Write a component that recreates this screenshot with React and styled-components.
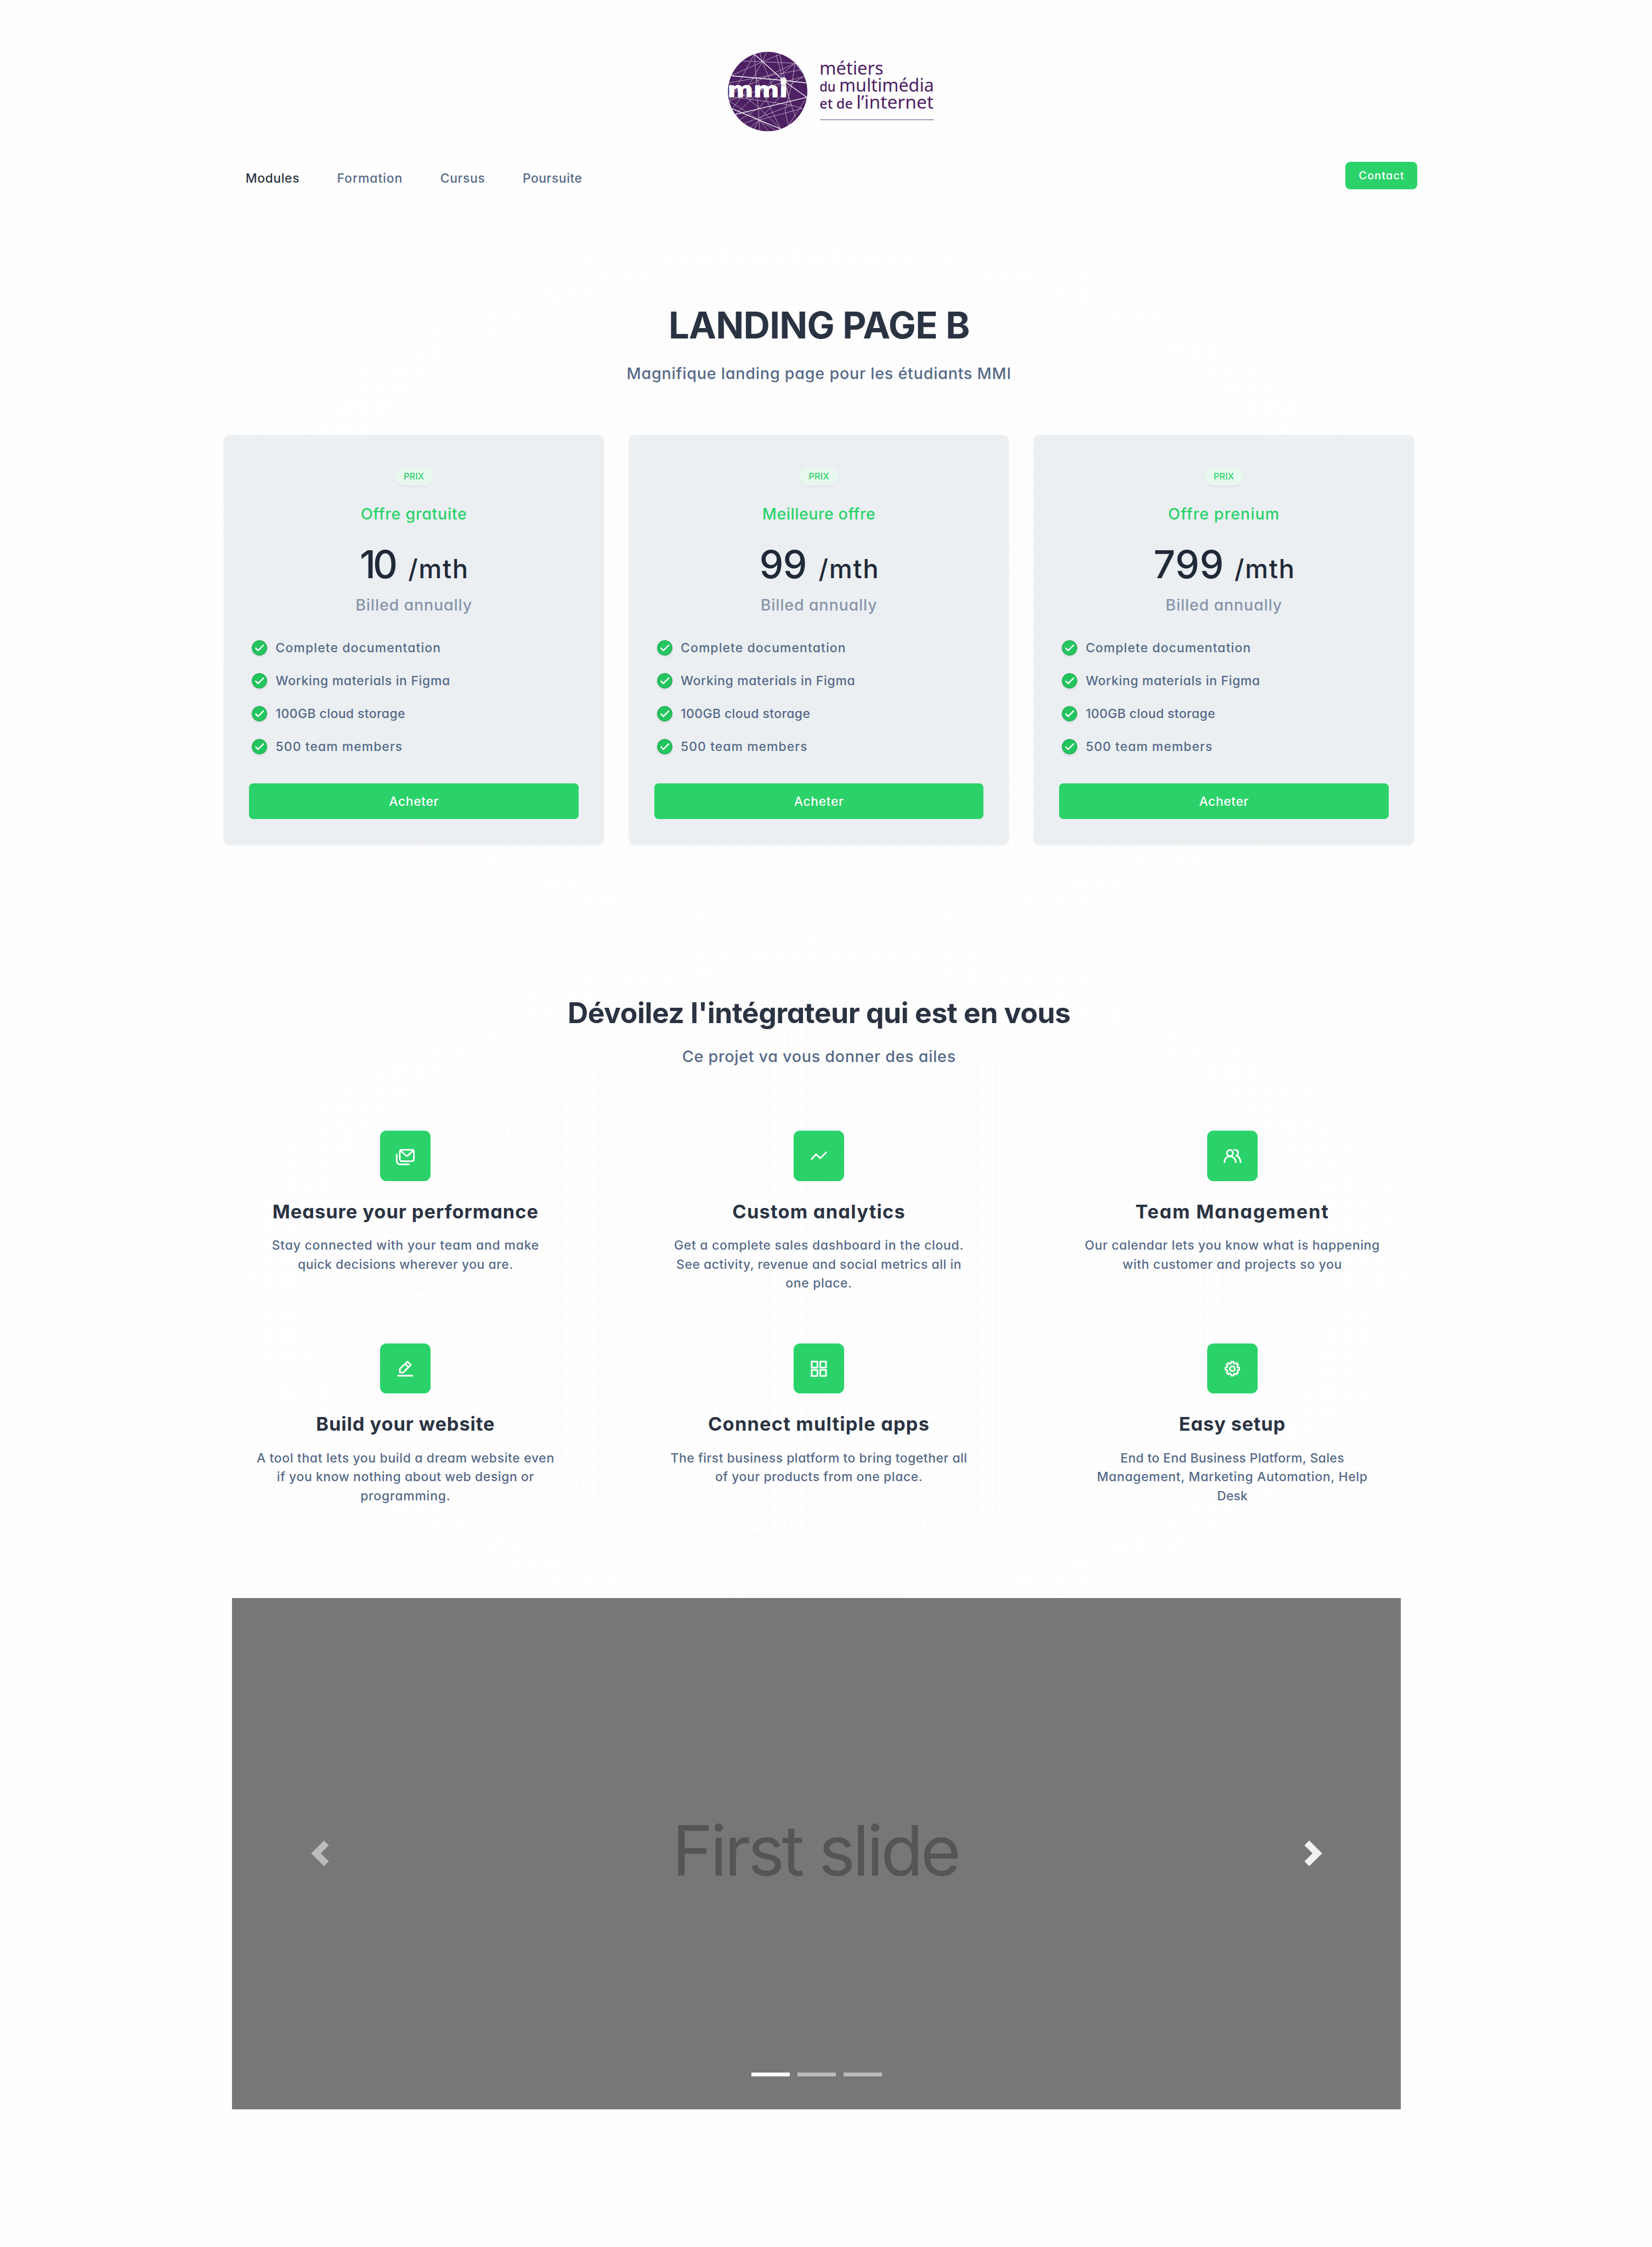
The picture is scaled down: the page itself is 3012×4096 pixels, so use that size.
import React from "react";
import styled, { createGlobalStyle } from "styled-components";

const color = {
  page: "#fefefe",
  green: "#2bd269",
  ink: "#2a3342",
  slate: "#556987",
  muted: "#8896ab",
  card: "#ebeff2",
  plum: "#4c2163",
};

const GlobalStyle = createGlobalStyle`
  html { font-size: 9.565px; }
  body {
    margin: 0;
    background: ${color.page};
    color: ${color.ink};
    font-family: Inter, "Liberation Sans", sans-serif;
    font-feature-settings: "cv11";
    font-weight: 500;
    -webkit-font-smoothing: antialiased;
  }
  * { box-sizing: border-box; }
  h1, h2, h3, p, ul { margin: 0; padding: 0; }
`;

const Page = styled.div`
  width: 314.9rem;
  min-height: 428.2rem;
  overflow: hidden;
`;

/* One unbroken line of text with its own tracking */
const Line = styled.span`
  display: block;
  white-space: nowrap;
  letter-spacing: ${(p) => p.$track || 0}em;
`;

/* ---------- header ---------- */

const Header = styled.header`
  display: flex;
  justify-content: center;
  padding: 8rem 0 0 2.1rem;
`;

const LogoSvg = styled.svg`
  display: block;
  width: 43rem;
  height: 19rem;
`;

const Nav = styled.nav`
  display: flex;
  justify-content: space-between;
  align-items: flex-start;
  height: 13rem;
  padding: 3.8rem 44.7rem 0 46.8rem;
`;

const NavLinks = styled.div`
  display: flex;
  gap: 7.15rem;
  padding-top: 1.36rem;
`;

const NavLink = styled.a`
  font-size: 2.4rem;
  line-height: 3.6rem;
  color: ${(p) => (p.$active ? color.ink : color.slate)};
`;

const Button = styled.button`
  display: flex;
  align-items: center;
  justify-content: center;
  width: ${(p) => (p.$small ? "13.7rem" : "100%")};
  height: ${(p) => (p.$small ? "5.3rem" : "6.8rem")};
  padding: ${(p) => (p.$small ? "0" : "0.2rem 0 0")};
  border: 0;
  border-radius: ${(p) => (p.$small ? "0.9rem" : "0.8rem")};
  background: ${color.green};
  color: #fff;
  font: inherit;
  font-feature-settings: inherit;
  font-size: ${(p) => (p.$small ? "2.1rem" : "2.4rem")};
`;

/* ---------- sections ---------- */

const Section = styled.section`
  padding: ${(p) => p.$pad};
  background-image:
    radial-gradient(ellipse 39% 58% at 49.5% 54%, transparent 60%, ${color.page} 100%),
    linear-gradient(to right, ${(p) => p.$grid} 0.25rem, transparent 0.25rem),
    linear-gradient(to bottom, ${(p) => p.$grid} 0.25rem, transparent 0.25rem);
  background-size: 100% 100%, 3.604rem 3.604rem, 3.604rem 3.604rem;
  background-position: 0 0, 2.36rem 0, 0 ${(p) => p.$phase};
`;

const Title = styled.h1`
  text-align: center;
  font-size: 7rem;
  line-height: 7.2rem;
  font-weight: 700;
`;

const Heading = styled.h2`
  text-align: center;
  font-size: 5.4rem;
  line-height: 6rem;
  font-weight: 700;
`;

const Lead = styled.p`
  margin-top: ${(p) => p.$top};
  text-align: center;
  font-size: 3rem;
  line-height: 4.8rem;
  color: ${color.slate};
`;

/* ---------- pricing ---------- */

const Plans = styled.div`
  display: grid;
  grid-template-columns: repeat(3, 72.4rem);
  gap: 4.8rem;
  margin-top: 9.34rem;
`;

const PlanCard = styled.article`
  display: flex;
  flex-direction: column;
  align-items: center;
  height: 78.05rem;
  padding: 6.05rem 4.8rem 4.85rem;
  border-radius: 1.2rem;
  background: ${color.card};
  box-shadow: 0 0.2rem 0.4rem rgba(30, 41, 59, 0.07);
`;

const Badge = styled.span`
  display: flex;
  align-items: center;
  justify-content: center;
  width: 7.4rem;
  height: 3.55rem;
  border-radius: 1.8rem;
  background: #e8f8ef;
  box-shadow: 0 0.15rem 0.3rem rgba(30, 41, 59, 0.07);
  color: ${color.green};
  font-size: 1.7rem;
`;

const PlanName = styled.h3`
  margin-top: 3.03rem;
  font-size: 3rem;
  line-height: 4.8rem;
  font-weight: 500;
  color: ${color.green};
`;

const Price = styled.div`
  display: flex;
  align-items: baseline;
  gap: ${(p) => p.$gap};
  height: 7.2rem;
  margin-top: 3.66rem;
  line-height: 7.2rem;
  color: #202938;
`;

const Amount = styled.span`
  font-size: 7.3rem;
  letter-spacing: ${(p) => p.$track}em;
`;

const Period = styled.span`
  font-size: 4.95rem;
  letter-spacing: 0.035em;
  margin-right: -0.035em;
`;

const Billing = styled.p`
  margin-top: 1.72rem;
  font-size: 3rem;
  line-height: 4.8rem;
  color: ${color.muted};
`;

const Perks = styled.ul`
  align-self: stretch;
  display: flex;
  flex-direction: column;
  gap: 2.7rem;
  margin: 3.96rem 0 5.13rem;
  padding-left: 0.5rem;
  list-style: none;
`;

const Perk = styled.li`
  display: flex;
  align-items: center;
  gap: 1.6rem;
  height: 3.6rem;
  font-size: 2.4rem;
  line-height: 3.6rem;
  color: ${color.slate};
`;

const CheckSvg = styled.svg`
  display: block;
  width: 2.95rem;
  height: 2.95rem;
  border-radius: 50%;
  box-shadow: 0 0.2rem 0.4rem rgba(30, 41, 59, 0.12);
`;

/* ---------- features ---------- */

const Features = styled.div`
  display: grid;
  grid-template-columns: repeat(3, 78.8rem);
  row-gap: 9.72rem;
  margin: 11.77rem 0 0 -4.8rem;
`;

const Feature = styled.article`
  display: flex;
  flex-direction: column;
  align-items: center;
  height: 30.78rem;
`;

const IconTile = styled.div`
  flex: none;
  width: 9.6rem;
  height: 9.6rem;
  border-radius: 1.2rem;
  background: ${color.green};

  svg {
    display: block;
    width: 100%;
    height: 100%;
    fill: none;
    stroke: #fff;
    stroke-width: 3.1;
    stroke-linecap: round;
    stroke-linejoin: round;
  }
`;

const FeatureTitle = styled.h3`
  margin-top: 3.43rem;
  font-size: 3.6rem;
  line-height: 4.8rem;
  font-weight: 700;
`;

const FeatureText = styled.p`
  margin-top: 2.27rem;
  text-align: center;
  font-size: 2.4rem;
  line-height: 3.6rem;
  color: ${color.slate};
`;

/* ---------- carousel ---------- */

const Carousel = styled.section`
  position: relative;
  display: flex;
  align-items: center;
  width: 222.8rem;
  height: 97.4rem;
  margin: 0 0 0 44.25rem;
  background: #777;
`;

const Control = styled.button`
  display: flex;
  justify-content: center;
  align-items: center;
  width: 15%;
  height: 100%;
  padding: 0;
  border: 0;
  background: none;
  opacity: ${(p) => (p.$dim ? 0.5 : 0.9)};

  svg {
    width: 4.9rem;
    height: 4.9rem;
    fill: #fff;
  }
`;

const SlideLabel = styled.div`
  flex: 1;
  display: flex;
  justify-content: center;
  padding: 0 0.5rem 1.2rem 0;
  font-size: 13.2rem;
  font-weight: 400;
  color: #555;
`;

const Indicators = styled.div`
  position: absolute;
  left: 0;
  right: 0;
  bottom: 6.2rem;
  display: flex;
  justify-content: center;
  gap: 1.5rem;
`;

const Indicator = styled.span`
  width: 7.3rem;
  height: 0.75rem;
  background: ${(p) => (p.$active ? "#fff" : "#bbb")};
`;

/* ---------- drawings ---------- */

const threads = [
  "M137 107L435 120", "M354 67L250 112L75 190", "M237 60L250 112L275 57", "M205 68L215 205L232 445",
  "M205 68L60 335", "M250 112L150 290", "M250 112L330 300", "M330 70L388 290", "M350 68L385 240L415 360L480 378",
  "M437 120L215 300L97 413", "M437 120L235 215L60 300", "M437 120L420 240L380 390L400 475", "M437 120L480 175",
  "M469 158L215 205L60 232", "M490 195L300 250L60 335", "M60 235L232 375L355 495", "M505 315L400 475",
  "M371 218L440 430", "M480 378L232 445", "M415 360L145 465", "M415 360L320 345L60 310", "M355 495L270 320L215 205",
  "M232 445L180 490", "M232 445L205 495", "M232 445L237 508", "M232 445L285 508", "M232 445L325 503",
  "M232 445L60 335", "M120 445L232 375L371 218", "M78 380L150 290", "M120 445L97 413", "M232 445L415 240L490 195",
];
const cables = [
  "M205 68L371 218L505 315", "M75 192L371 218L500 232", "M505 315L97 413", "M78 380L232 445L355 495",
];

function Logo() {
  return (
    <LogoSvg viewBox="0 0 1290 570" role="img" aria-label="métiers du multimédia et de l’internet">
      <defs>
        <clipPath id="globe"><circle cx="281" cy="282" r="227" /></clipPath>
      </defs>
      <circle cx="281" cy="282" r="227" fill={color.plum} />
      <g clipPath="url(#globe)" fill="none" stroke="#fff">
        <g strokeWidth="3" opacity="0.62">{threads.map((d) => <path key={d} d={d} />)}</g>
        <g strokeWidth="4.2">{cables.map((d) => <path key={d} d={d} />)}</g>
      </g>
      <circle cx="371" cy="218" r="18" fill="#fff" />
      <text x="51" y="315" textLength="345" lengthAdjust="spacingAndGlyphs" fontFamily="'DejaVu Sans', sans-serif" fontWeight="700" fontSize="117" fill="#fff" stroke="#fff" strokeWidth="3">mmi</text>
      <g fontFamily="'Noto Sans', sans-serif" fill={color.plum}>
        <text x="577" y="185" fontSize="105" fontWeight="400" textLength="366" lengthAdjust="spacingAndGlyphs">métiers</text>
        <text x="578" y="282" fontSize="80" fontWeight="500" textLength="92" lengthAdjust="spacingAndGlyphs">du</text>
        <text x="690" y="282" fontSize="105" fontWeight="400" textLength="542" lengthAdjust="spacingAndGlyphs">multimédia</text>
        <text x="578" y="379" fontSize="80" fontWeight="500" textLength="190" lengthAdjust="spacingAndGlyphs">et de</text>
        <text x="788" y="379" fontSize="105" fontWeight="400" textLength="442" lengthAdjust="spacingAndGlyphs">l’internet</text>
      </g>
      <path d="M580 443H1232" stroke={color.plum} strokeWidth="3.6" opacity="0.9" />
    </LogoSvg>
  );
}

const gearPath = (() => {
  const pts = [];
  for (let k = 0; k < 8; k += 1) {
    [[-14, 10.6], [-10, 13.4], [10, 13.4], [14, 10.6]].forEach(([a, r]) => {
      const t = ((k * 45 + a) * Math.PI) / 180;
      pts.push(`${(48 + r * Math.cos(t)).toFixed(2)} ${(48 + r * Math.sin(t)).toFixed(2)}`);
    });
  }
  return `M${pts.join("L")}Z`;
})();

const icons = {
  mail: (
    <>
      <rect x="37.6" y="36.6" width="26.8" height="21.6" rx="3" />
      <path d="M39 38.2L49.4 47.6Q51 49 52.6 47.6L63 38.2" />
      <path d="M31.6 45.6V57Q31.6 64.4 39 64.4H55.4" />
    </>
  ),
  trend: <path d="M34.2 54.3L42.8 45L50.8 52.6L62.2 41.5" />,
  team: (
    <>
      <circle cx="43.4" cy="42.7" r="5.9" />
      <path d="M33 60.5C33 53.4 37.6 49 43.6 49S54.4 53.4 54.4 60.5" />
      <path d="M51.6 36.7C60 36.4 61.4 44.6 55.6 47.8C60.6 50 63.6 54.8 63.6 60.5" />
    </>
  ),
  edit: (
    <>
      <path d="M37.6 55.3V48.4L52.4 34.6L58.6 40.8L44.2 55.3Z" />
      <path d="M47.8 39L54.4 45.4" />
      <path d="M34.5 61.4H61.5" />
    </>
  ),
  apps: (
    <>
      <rect x="34.3" y="34.5" width="11" height="11.4" />
      <rect x="50.7" y="34.5" width="11" height="11.4" />
      <rect x="34.3" y="50.5" width="11" height="11.4" />
      <rect x="50.7" y="50.5" width="11" height="11.4" />
    </>
  ),
  gear: (
    <>
      <path d={gearPath} />
      <circle cx="48" cy="48" r="4.7" />
    </>
  ),
};

function Check() {
  return (
    <CheckSvg viewBox="0 0 30 30">
      <circle cx="15" cy="15" r="15" fill="#1fa34f" />
      <circle cx="15" cy="15" r="13.6" fill="#23c55e" />
      <path d="M7.8 15.6L12.2 20L22.6 9.8" fill="none" stroke="#fff" strokeWidth="2.7" strokeLinecap="round" strokeLinejoin="round" />
    </CheckSvg>
  );
}

/* ---------- data: [text, tracking] ---------- */

const links = [["Modules", 0.0255], ["Formation", 0.0404], ["Cursus", 0.0276], ["Poursuite", 0.0218]];

const plans = [
  { name: ["Offre gratuite", 0.0241], amount: "10", track: -0.07, gap: "2.5rem" },
  { name: ["Meilleure offre", 0.0173], amount: "99", track: -0.0135, gap: "2.3rem" },
  { name: ["Offre prenium", 0.0359], amount: "799", track: 0.0069, gap: "2rem" },
];

const perks = [
  ["Complete documentation", 0.048],
  ["Working materials in Figma", 0.03],
  ["100GB cloud storage", 0.018],
  ["500 team members", 0.046],
];

const features = [
  { icon: "mail", title: ["Measure your performance", 0.0277], lines: [["Stay connected with your team and make", 0.0349], ["quick decisions wherever you are.", 0.0228]] },
  { icon: "trend", title: ["Custom analytics", 0.035], lines: [["Get a complete sales dashboard in the cloud.", 0.0305], ["See activity, revenue and social metrics all in", 0.0228], ["one place.", 0.028]] },
  { icon: "team", title: ["Team Management", 0.051], lines: [["Our calendar lets you know what is happening", 0.028], ["with customer and projects so you", 0.029]] },
  { icon: "edit", title: ["Build your website", 0.026], lines: [["A tool that lets you build a dream website even", 0.0281], ["if you know nothing about web design or", 0.0253], ["programming.", 0.035]] },
  { icon: "apps", title: ["Connect multiple apps", 0.034], lines: [["The first business platform to bring together all", 0.0214], ["of your products from one place.", 0.0245]] },
  { icon: "gear", title: ["Easy setup", 0.024], lines: [["End to End Business Platform, Sales", 0.016], ["Management, Marketing Automation, Help", 0.03], ["Desk", 0.005]] },
];

function Plan({ plan }) {
  return (
    <PlanCard>
      <Badge><Line $track={0.0087}>PRIX</Line></Badge>
      <PlanName><Line $track={plan.name[1]}>{plan.name[0]}</Line></PlanName>
      <Price $gap={plan.gap}>
        <Amount $track={plan.track}>{plan.amount}</Amount>
        <Period>/mth</Period>
      </Price>
      <Billing><Line $track={0.0271}>Billed annually</Line></Billing>
      <Perks>
        {perks.map(([text, track]) => (
          <Perk key={text}><Check /><Line $track={track}>{text}</Line></Perk>
        ))}
      </Perks>
      <Button><Line $track={0.026}>Acheter</Line></Button>
    </PlanCard>
  );
}

export default function App() {
  return (
    <Page>
      <GlobalStyle />
      <Header><Logo /></Header>
      <Nav>
        <NavLinks>
          {links.map(([text, track], i) => (
            <NavLink key={text} $active={i === 0}><Line $track={track}>{text}</Line></NavLink>
          ))}
        </NavLinks>
        <Button $small><Line $track={0.0494}>Contact</Line></Button>
      </Nav>

      <Section $pad="18.4rem 45.35rem 14.05rem 42.7rem" $phase="3.43rem" $grid="#fbfbfc">
        <Title><Line $track={-0.0109}>LANDING PAGE B</Line></Title>
        <Lead $top="3.16rem"><Line $track={0.0266}>Magnifique landing page pour les étudiants MMI</Line></Lead>
        <Plans>{plans.map((plan) => <Plan key={plan.amount} plan={plan} />)}</Plans>
      </Section>

      <Section $pad="15.12rem 45.35rem 17.78rem 42.7rem" $phase="2.07rem" $grid="#fafafb">
        <Heading><Line $track={-0.0089}>Dévoilez l'intégrateur qui est en vous</Line></Heading>
        <Lead $top="2.81rem"><Line $track={0.0247}>Ce projet va vous donner des ailes</Line></Lead>
        <Features>
          {features.map(({ icon, title, lines }) => (
            <Feature key={icon}>
              <IconTile><svg viewBox="0 0 96 96">{icons[icon]}</svg></IconTile>
              <FeatureTitle><Line $track={title[1]}>{title[0]}</Line></FeatureTitle>
              <FeatureText>
                {lines.map(([text, track]) => <Line key={text} $track={track}>{text}</Line>)}
              </FeatureText>
            </Feature>
          ))}
        </Features>
      </Section>

      <Carousel>
        <Control $dim aria-label="Previous">
          <svg viewBox="0 0 8 8"><path d="M5.25 0l-4 4 4 4 1.5-1.5-2.5-2.5 2.5-2.5-1.5-1.5z" /></svg>
        </Control>
        <SlideLabel><Line $track={-0.038}>First slide</Line></SlideLabel>
        <Control aria-label="Next">
          <svg viewBox="0 0 8 8"><path d="M2.75 0l-1.5 1.5 2.5 2.5-2.5 2.5 1.5 1.5 4-4-4-4z" /></svg>
        </Control>
        <Indicators>
          <Indicator $active /><Indicator /><Indicator />
        </Indicators>
      </Carousel>
    </Page>
  );
}
